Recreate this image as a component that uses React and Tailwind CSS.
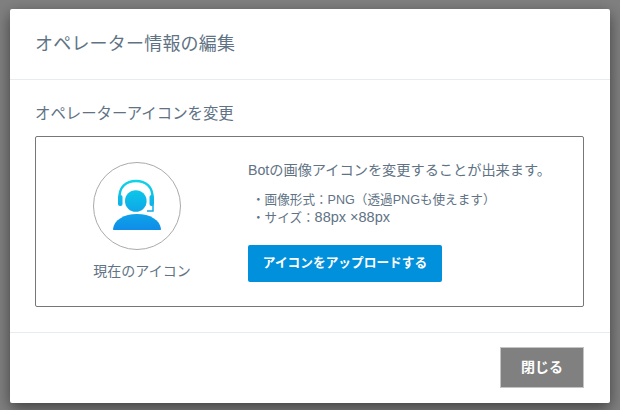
import React from 'react'

const font = "font-['Liberation_Sans','Noto_Sans_CJK_JP',sans-serif]"

function BotIcon() {
    return (
        <svg width="60" height="60" viewBox="0 0 60 60" fill="none" className="-mt-[4px]">
            <defs>
                <linearGradient id="bot" gradientUnits="userSpaceOnUse" x1="0" y1="6" x2="0" y2="56">
                    <stop offset="0" stopColor="#0cd6e8" />
                    <stop offset="1" stopColor="#0f8ce8" />
                </linearGradient>
            </defs>
            <path d="M12.5 24 C12 13 19 7 29 7 C39 7 46 13 45.5 24" stroke="url(#bot)" strokeWidth="2.4" />
            <rect x="11" y="21" width="4.5" height="11" rx="2" fill="url(#bot)" />
            <rect x="42.5" y="21" width="4.5" height="11" rx="2" fill="url(#bot)" />
            <path d="M46 31 V37 H40" stroke="url(#bot)" strokeWidth="1.5" />
            <circle cx="28.8" cy="27" r="10.8" fill="url(#bot)" />
            <path d="M6 55 C7 46 17 40 30 40 C43 40 53 46 54 55 C54 55.7 53.5 56 53 56 H7 C6.5 56 6 55.7 6 55 Z" fill="url(#bot)" />
        </svg>
    )
}

function App() {
    return (
        <div className={`w-[620px] h-[410px] overflow-hidden bg-[#808080] pt-[9px] px-[10px] ${font}`}>
            <div className="w-[600px] h-[394px] bg-white rounded-[2px] shadow-[0_5px_15px_rgba(0,0,0,0.5)] flex flex-col">
                <div className="h-[71px] shrink-0 border-b border-[#e9ecef] flex items-center px-[25px]">
                    <h1 className="text-[18px] tracking-[0.2px] leading-none text-[#5f7385]">オペレーター情報の編集</h1>
                </div>
                <div className="h-[253px] shrink-0 border-b border-[#e9ecef] px-[25px] pt-[24px]">
                    <p className="text-[15.4px] leading-[19px] text-[#5f7385] h-[32px]">オペレーターアイコンを変更</p>
                    <div className="w-[549px] h-[171px] border border-[#777] rounded-[2px] flex">
                        <div className="w-[212px] shrink-0 flex flex-col items-center pt-[25px]">
                            <div className="w-[88px] h-[88px] mr-[10px] rounded-full border border-[#aaa] flex items-center justify-center">
                                <BotIcon />
                            </div>
                            <p className="mt-[11px] text-[14px] leading-[20px] text-[#5f7385]">現在のアイコン</p>
                        </div>
                        <div className="pt-[24px]">
                            <p className="text-[14.2px] leading-[18px] text-[#5f7385]">Botの画像アイコンを変更することが出来ます。</p>
                            <ul className="mt-[13px] pl-[4px] text-[12.6px] leading-[17px] text-[#5f7385]">
                                <li>・画像形式：PNG（透過PNGも使えます）</li>
                                <li>・サイズ：<span className="text-[14.5px]">88px ×88px</span></li>
                            </ul>
                            <button className="mt-[18px] block w-[194px] h-[37px] bg-[#0090dc] rounded-[2px] text-white text-[12.7px] font-bold">アイコンをアップロードする</button>
                        </div>
                    </div>
                </div>
                <div className="flex justify-end pt-[14px] pr-[26px]">
                    <button className="w-[84px] h-[41px] bg-[#808080] border border-[#c4c4c4] text-white text-[14px] font-bold">閉じる</button>
                </div>
            </div>
        </div>
    )
}

export default App
